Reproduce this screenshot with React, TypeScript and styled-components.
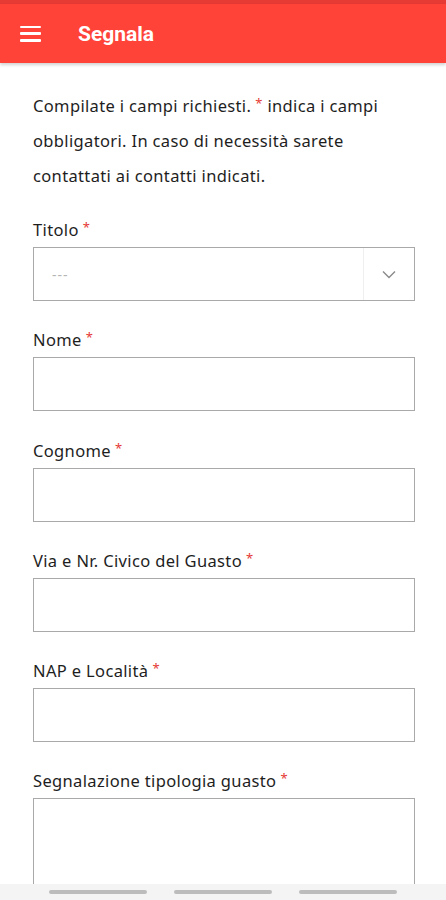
import React from 'react';
import styled, { createGlobalStyle } from 'styled-components';

const GlobalStyle = createGlobalStyle`
  html, body {
    margin: 0;
    padding: 0;
    background: #ffffff;
  }
  body {
    font-family: 'Noto Sans', 'Open Sans', sans-serif;
    color: #1e1e1e;
  }
  * {
    box-sizing: border-box;
  }
`;

const Screen = styled.div`
  width: 446px;
  height: 900px;
  display: flex;
  flex-direction: column;
  overflow: hidden;
  background: #ffffff;
`;

const StatusStrip = styled.div`
  height: 4px;
  background: #e63a34;
  flex-shrink: 0;
`;

const TopBar = styled.header`
  height: 59px;
  background: #ff4338;
  display: flex;
  align-items: center;
  padding: 0 0 0 20px;
  gap: 37px;
  flex-shrink: 0;
  box-shadow: 0 2px 3px rgba(0, 0, 0, 0.18);
  position: relative;
  z-index: 1;
`;

const MenuButton = styled.button`
  width: 21px;
  height: 16px;
  padding: 0;
  border: none;
  background: none;
  display: flex;
  flex-direction: column;
  justify-content: space-between;
  cursor: pointer;
`;

const MenuLine = styled.span`
  display: block;
  height: 2.5px;
  width: 100%;
  background: #ffffff;
  border-radius: 1px;
`;

const Title = styled.h1`
  margin: 0;
  font-family: Roboto, 'Liberation Sans', sans-serif;
  font-size: 21px;
  font-weight: 700;
  color: #ffffff;
`;

const Content = styled.main`
  flex: 1;
  overflow: hidden;
  padding: 25px 31px 0 33px;
`;

const Intro = styled.p`
  margin: 0 0 25px;
  font-size: 16.5px;
  letter-spacing: 0.35px;
  line-height: 35px;
  color: #1e1e1e;
`;

const Star = styled.span`
  color: #e53935;
  font-size: 13px;
  line-height: 1;
  vertical-align: 4px;
  margin-left: 4px;
`;

const Field = styled.div`
  display: flex;
  flex-direction: column;
  margin-bottom: 27.25px;
`;

const Label = styled.label`
  font-size: 16.5px;
  letter-spacing: 0.35px;
  line-height: 22px;
  margin: 1px 0 6px;
  color: #1e1e1e;
`;

const TextInput = styled.input`
  height: 54px;
  width: 100%;
  border: 1px solid #a9a9a9;
  border-radius: 0;
  background: #ffffff;
  outline: none;
`;

const TextArea = styled.textarea`
  height: 140px;
  width: 100%;
  border: 1px solid #a9a9a9;
  border-radius: 0;
  background: #ffffff;
  outline: none;
  resize: none;
`;

const SelectBox = styled.div`
  height: 54px;
  display: flex;
  border: 1px solid #a9a9a9;
  background: #ffffff;
`;

const SelectValue = styled.div`
  flex: 1;
  display: flex;
  align-items: center;
  padding-left: 18px;
  font-size: 14px;
  color: #b5b5b5;
  letter-spacing: 1px;
`;

const SelectArrow = styled.div`
  width: 51px;
  display: flex;
  align-items: center;
  justify-content: center;
  border-left: 1px solid #efefef;
`;

const NavBar = styled.div`
  height: 16px;
  background: #f4f4f4;
  flex-shrink: 0;
  display: flex;
  align-items: center;
  justify-content: center;
  gap: 27px;
  padding-bottom: 1px;
`;

const NavPill = styled.span`
  width: 98px;
  height: 4px;
  border-radius: 2px;
  background: #bcbcbc;
`;

const fields = [
  'Nome',
  'Cognome',
  'Via e Nr. Civico del Guasto',
  'NAP e Località',
];

const App: React.FC = () => {
  return (
    <Screen>
      <GlobalStyle />
      <StatusStrip />
      <TopBar>
        <MenuButton aria-label="menu">
          <MenuLine />
          <MenuLine />
          <MenuLine />
        </MenuButton>
        <Title>Segnala</Title>
      </TopBar>

      <Content>
        <Intro>
          Compilate i campi richiesti.<Star>*</Star> indica i campi obbligatori. In caso di
          necessità sarete contattati ai contatti indicati.
        </Intro>

        <Field>
          <Label>
            Titolo<Star>*</Star>
          </Label>
          <SelectBox>
            <SelectValue>---</SelectValue>
            <SelectArrow>
              <svg width="14" height="9" viewBox="0 0 14 9" fill="none">
                <path d="M1 1.5L7 7.5L13 1.5" stroke="#8a8a8a" strokeWidth="1.4" />
              </svg>
            </SelectArrow>
          </SelectBox>
        </Field>

        {fields.map((name) => (
          <Field key={name}>
            <Label>
              {name}
              <Star>*</Star>
            </Label>
            <TextInput type="text" />
          </Field>
        ))}

        <Field>
          <Label>
            Segnalazione tipologia guasto<Star>*</Star>
          </Label>
          <TextArea />
        </Field>
      </Content>

      <NavBar>
        <NavPill />
        <NavPill />
        <NavPill />
      </NavBar>
    </Screen>
  );
};

export default App;
